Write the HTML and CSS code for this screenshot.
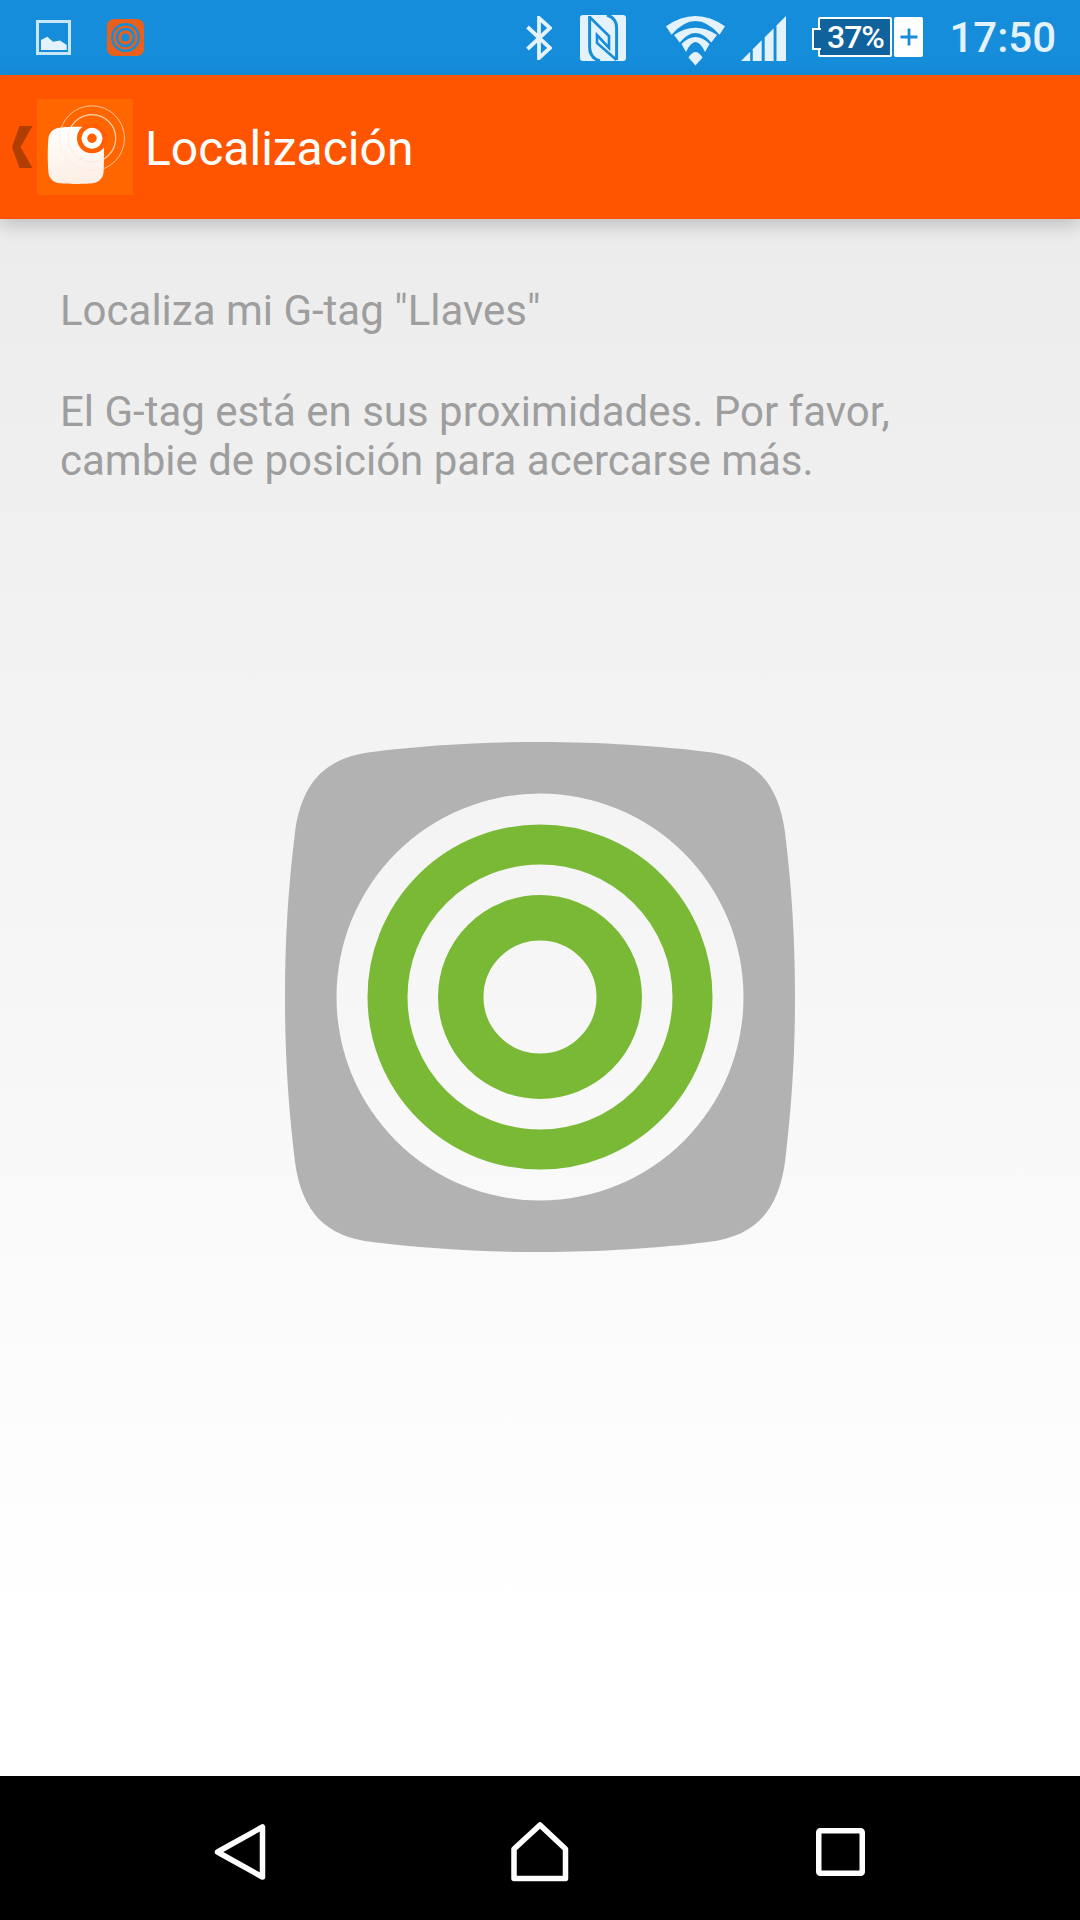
FILE: index.html
```html
<!DOCTYPE html>
<html lang="es">

<head>
  <meta charset="UTF-8">
  <meta name="viewport" content="width=device-width, initial-scale=1.0">
  <title>Localización</title>
  <link rel="stylesheet" href="styles.css">
</head>

<body>
  <div class="status-bar">
    <svg class="notif-image" width="35" height="35" viewBox="0 0 35 35">
      <rect x="1.5" y="1.5" width="32" height="32" fill="none" stroke="#c9e5f8" stroke-width="3" />
      <path d="M5 20 L11.3 16.7 L17 21.7 L24 20.5 L30.7 25 V30 H5 Z" fill="#e3f2fb" />
    </svg>
    <svg class="notif-app" width="37" height="37" viewBox="0 0 37 37">
      <rect width="37" height="37" rx="7" fill="#e8601c" />
      <circle cx="18.5" cy="18.5" r="4" fill="#168ddb" />
      <circle cx="18.5" cy="18.5" r="8.5" fill="none" stroke="#168ddb" stroke-width="2.6" />
      <circle cx="18.5" cy="18.5" r="13.3" fill="none" stroke="#168ddb" stroke-width="2.4" />
    </svg>

    <div class="status-right">
      <svg class="ic-bt" width="26" height="44" viewBox="0 0 26 44">
        <path d="M1.5 11 L24 32 L13 42 V2 L24 12 L1.5 33" fill="none" stroke="#e3f2fb" stroke-width="3.8" />
      </svg>
      <svg class="ic-nfc" width="46" height="46" viewBox="0 0 46 46">
        <rect width="46" height="46" rx="3" fill="#e3f2fb" />
        <path d="M9.6 2 L29 21 V33 L17 20 V28 L36.6 45" fill="none" stroke="#168ddb" stroke-width="2.6" />
        <path d="M9.6 1 V32 Q9.6 43 20 46" fill="none" stroke="#168ddb" stroke-width="3" />
        <path d="M36.6 45 V13 Q36.6 3 27 0" fill="none" stroke="#168ddb" stroke-width="3" />
      </svg>
      <svg class="ic-wifi" width="59" height="50" viewBox="0 0 59 50" fill="#e3f2fb">
        <path d="M0 10.3 Q29.5 -10.3 59 10.3 L53.5 18.7 Q29.5 -8.7 5.5 18.7 Z" />
        <path d="M8 19 Q29.5 4.4 51 19 L45.3 26.5 Q29.5 7.5 13.7 26.5 Z" />
        <path d="M15.5 28 Q29.5 14 43.5 28 L39 36 Q29.5 16 20 36 Z" />
        <path d="M22.5 41.5 Q29.5 30.5 36.5 41.5 L29.5 49.5 Z" />
      </svg>
      <svg class="ic-signal" width="45" height="45" viewBox="0 0 45 45" fill="#e3f2fb">
        <polygon points="0,45 9.2,35.8 9.2,45" />
        <polygon points="11.8,33.2 20.7,24.3 20.7,45 11.8,45" />
        <polygon points="23.7,21.3 32.6,12.4 32.6,45 23.7,45" />
        <polygon points="35.5,9.5 45,0 45,45 35.5,45" />
      </svg>
      <div class="battery">
        <div class="battery-body">37%</div>
        <div class="battery-plug">
          <svg width="18" height="18" viewBox="0 0 18 18">
            <path d="M0.5 9 H17.5 M9 0.5 V17.5" stroke="#168ddb" stroke-width="2.8" />
          </svg>
        </div>
      </div>
      <span class="clock">17:50</span>
    </div>
  </div>

  <div class="app-bar">
    <svg class="chevron" width="21" height="42" viewBox="0 0 21 42">
      <polygon points="7.5,0 20.5,0 8.5,21 20.5,42 7.5,42 0,21" fill="#b03e00" />
    </svg>
    <svg class="app-icon" width="96" height="96" viewBox="0 0 96 96">
      <defs>
        <linearGradient id="tagFill" x1="0" y1="0" x2="0" y2="1">
          <stop offset="0" stop-color="#ffffff" />
          <stop offset="1" stop-color="#fdeee4" />
        </linearGradient>
      </defs>
      <rect width="96" height="96" fill="#ff6600" />
      <g fill="none" stroke="#ffffff">
        <circle cx="55" cy="39.3" r="32.5" stroke-width="1" opacity="0.45" />
        <circle cx="55" cy="39.3" r="23.7" stroke-width="1.2" opacity="0.65" />
      </g>
      <path d="M39 27.7 C46 27.7 53 28 57 29 C62 30 66 34 66.5 39 C67.2 46 67.2 67 66.5 74 C66 79 62 83 57 84 C50 85.2 28 85.2 21 84 C16 83 12 79 11.5 74 C10.5 67 10.5 46 11.5 39 C12 34 16 30 21 29 C25 28 32 27.7 39 27.7 Z" fill="url(#tagFill)" />
      <g fill="none" stroke="#fbd9c2">
        <circle cx="55" cy="39.3" r="32.5" stroke-width="1" opacity="0.3" />
        <circle cx="55" cy="39.3" r="23.7" stroke-width="1" opacity="0.4" />
      </g>
      <circle cx="55" cy="39.3" r="15" fill="#ff5f00" />
      <circle cx="55" cy="39.3" r="10.5" fill="#ffffff" />
      <circle cx="55" cy="39.3" r="4.7" fill="#ff5f00" />
    </svg>
    <h1 class="app-title">Localización</h1>
  </div>

  <div class="content">
    <div class="message">
      <p>Localiza mi G-tag "Llaves"</p>
      <p>El G-tag está en sus proximidades. Por favor, cambie de posición para acercarse más.</p>
    </div>
    <svg class="tag" width="510" height="510" viewBox="0 0 510 510">
      <path fill="#b2b2b2" fill-rule="evenodd" d="M255 0 C315 0 375 4 423 10 C469 15.5 493 39.5 500 90 C507 148 510 198 510 255 C510 312 507 362 500 420 C493 470.5 469 494.5 423 500 C375 506 315 510 255 510 C195 510 135 506 87 500 C41 494.5 17 470.5 10 420 C3 362 0 312 0 255 C0 198 3 148 10 90 C17 39.5 41 15.5 87 10 C135 4 195 0 255 0 Z M51.5 255 a203.5 203.5 0 1 0 407 0 a203.5 203.5 0 1 0 -407 0 Z" />
      <circle cx="255" cy="255" r="152.5" fill="none" stroke="#7ab936" stroke-width="40" />
      <circle cx="255" cy="255" r="79.25" fill="none" stroke="#7ab936" stroke-width="45.5" />
    </svg>
  </div>

  <div class="nav-bar">
    <svg width="52" height="56" viewBox="0 0 52 56">
      <path d="M3.5 28 L48.5 3 V53 Z" fill="none" stroke="#fff" stroke-width="5.5" stroke-linejoin="round" />
    </svg>
    <svg width="58" height="60" viewBox="0 0 58 60">
      <path d="M29 3 L54.5 27 V56.5 H3 V27 Z" fill="none" stroke="#fff" stroke-width="5.5" stroke-linejoin="round" />
    </svg>
    <svg width="49" height="48" viewBox="0 0 49 48">
      <rect x="2.75" y="2.75" width="43.5" height="42.5" rx="1.5" fill="none" stroke="#fff" stroke-width="5.5" />
    </svg>
  </div>
</body>

</html>
```

FILE: styles.css
```css
* {
  box-sizing: border-box;
}

body {
  font-family: Roboto, 'Noto Sans', sans-serif;
  margin: 0;
  width: 1080px;
  height: 1920px;
  display: flex;
  flex-direction: column;
  overflow: hidden;
}

svg {
  display: block;
  flex-shrink: 0;
}

.status-bar {
  background-color: #168ddb;
  height: 75px;
  display: flex;
  align-items: center;
  padding: 0 24px 0 36px;
}

.notif-app {
  margin-left: 36px;
}

.status-right {
  margin-left: auto;
  display: flex;
  align-items: center;
}

.ic-nfc {
  margin-left: 28px;
}

.ic-wifi {
  margin-left: 40px;
  margin-top: 6px;
}

.ic-signal {
  margin-left: 16px;
  margin-top: 1px;
}

.battery {
  margin-left: 26px;
  margin-top: -1px;
  display: flex;
  gap: 2px;
}

.battery-body {
  position: relative;
  margin-left: 6px;
  width: 74px;
  height: 40px;
  background-color: #10629c;
  border: 2px solid #fff;
  border-radius: 2px;
  color: #fff;
  font-size: 32px;
  font-weight: 500;
  letter-spacing: -1px;
  line-height: 36px;
  text-align: center;
}

.battery-body::before {
  content: "";
  position: absolute;
  left: -8px;
  top: 9px;
  width: 7px;
  height: 18px;
  background-color: #10629c;
  border: 2px solid #fff;
  border-right: none;
}

.battery-plug {
  width: 29px;
  height: 40px;
  background-color: #fff;
  border-radius: 2px;
  display: flex;
  align-items: center;
  justify-content: center;
}

.clock {
  margin-left: 26px;
  color: #e3f2fb;
  font-size: 42px;
  font-weight: 500;
  line-height: 48px;
}

.app-bar {
  position: relative;
  z-index: 1;
  background-color: #ff5500;
  height: 144px;
  display: flex;
  align-items: center;
  box-shadow: 0 6px 18px rgba(0, 0, 0, 0.2);
}

.chevron {
  margin-left: 12px;
}

.app-icon {
  margin-left: 4px;
}

.app-title {
  margin: 2px 0 0 12px;
  color: #fff;
  font-size: 48px;
  font-weight: 400;
}

.content {
  flex: 1;
  display: grid;
  background: linear-gradient(#ececec 0%, #ffffff 90%);
}

.message,
.tag {
  grid-area: 1 / 1;
}

.message {
  padding: 67px 150px 0 60px;
  color: #9e9e9e;
  font-size: 42px;
  line-height: 49px;
}

.message p {
  margin: 0 0 52px;
}

.tag {
  justify-self: center;
  align-self: center;
  margin-bottom: 2px;
}

.nav-bar {
  background-color: #000;
  height: 144px;
  padding: 8px 90px 0;
  display: grid;
  grid-template-columns: repeat(3, 1fr);
  justify-items: center;
  align-items: center;
}
```
